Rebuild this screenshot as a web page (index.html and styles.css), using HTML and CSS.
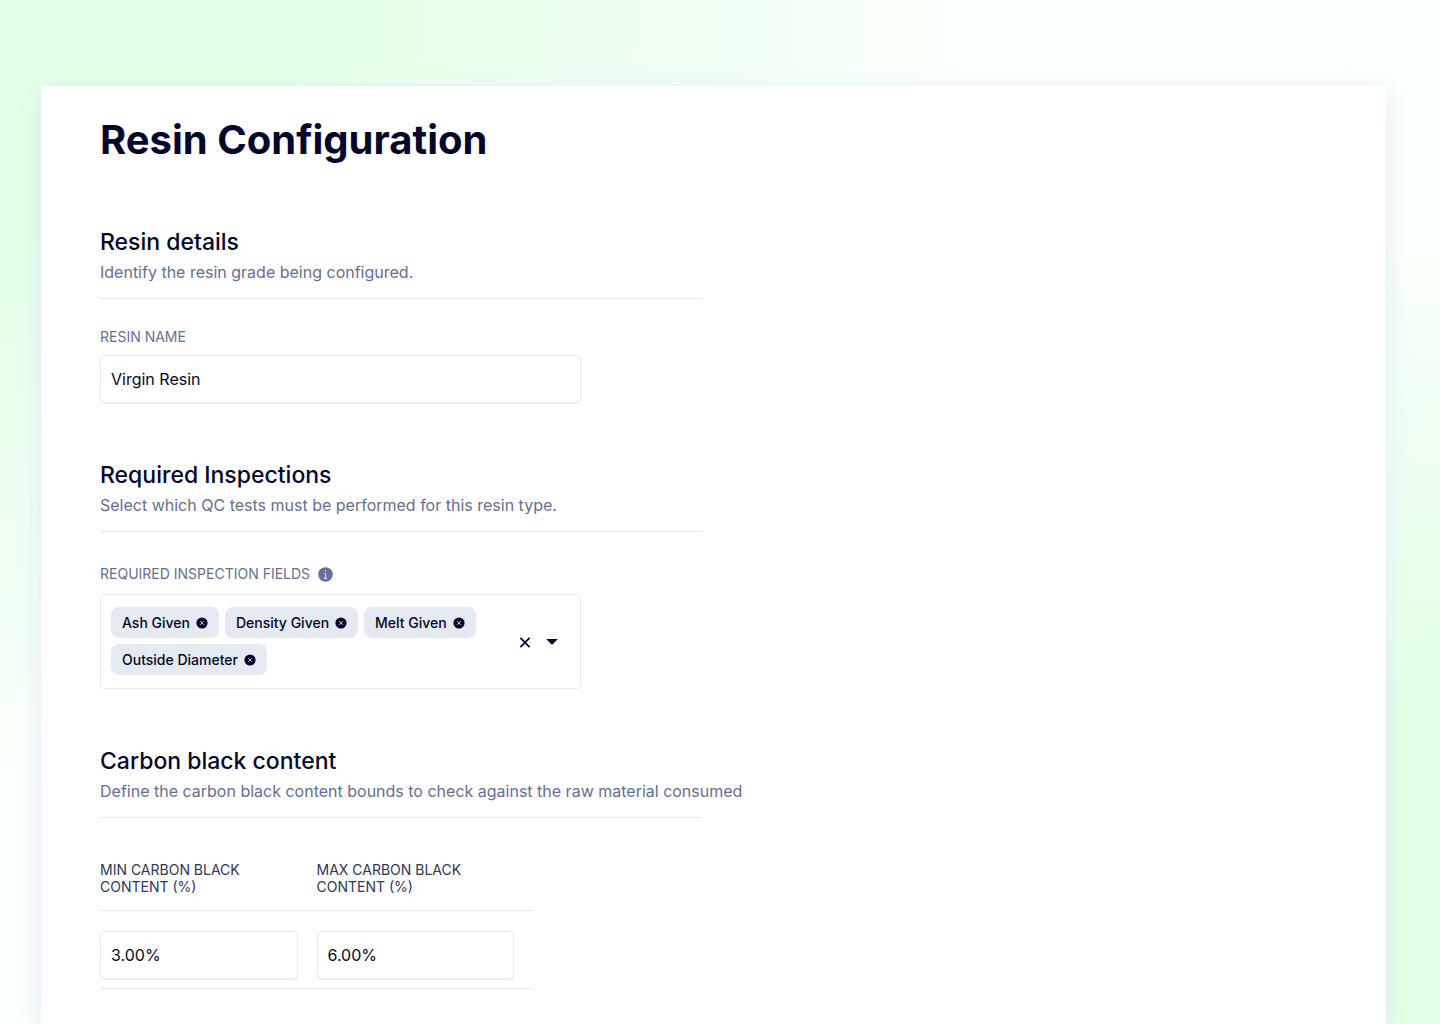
FILE: index.html
```html
<!DOCTYPE html>
<html lang="en">
<head>
<meta charset="utf-8">
<meta name="viewport" content="width=device-width, initial-scale=1">
<title>Resin Configuration</title>
<link rel="stylesheet" href="styles.css">
</head>
<body>
<svg class="sprite" aria-hidden="true">
  <symbol id="remove" viewBox="0 0 12 12">
    <circle cx="6" cy="6" r="5.6" fill="#03082b"/>
    <path d="M4.1 4.1l3.8 3.8M7.9 4.1L4.1 7.9" stroke="#b9bfce" stroke-width="1"/>
  </symbol>
</svg>
<main class="card">
  <h1 class="title">Resin Configuration</h1>
  <form class="form">
    <section class="section">
      <header class="section-head">
        <h2>Resin details</h2>
        <p>Identify the resin grade being configured.</p>
      </header>
      <div class="field">
        <label class="label" for="resin-name">RESIN NAME</label>
        <input class="input" id="resin-name" type="text" value="Virgin Resin">
      </div>
    </section>

    <section class="section">
      <header class="section-head">
        <h2>Required Inspections</h2>
        <p>Select which QC tests must be performed for this resin type.</p>
      </header>
      <div class="field field-multi">
        <div class="label-row">
          <span class="label" id="fields-label">REQUIRED INSPECTION FIELDS</span>
          <button class="icon-button" type="button" aria-label="About required inspection fields">
            <svg width="15" height="15" viewBox="0 0 14 14"><circle cx="7" cy="7" r="6.8" fill="#666f98"/><path d="M7 2.8v1.5M5.7 6H7v4.6M5.5 10.6h3" fill="none" stroke="#d5d9e8" stroke-width="1"/></svg>
          </button>
        </div>
        <div class="multi" role="group" aria-labelledby="fields-label">
          <ul class="chips">
            <li class="chip">Ash Given<button class="icon-button" type="button" aria-label="Remove Ash Given"><svg width="12" height="12"><use href="#remove"/></svg></button></li>
            <li class="chip">Density Given<button class="icon-button" type="button" aria-label="Remove Density Given"><svg width="12" height="12"><use href="#remove"/></svg></button></li>
            <li class="chip">Melt Given<button class="icon-button" type="button" aria-label="Remove Melt Given"><svg width="12" height="12"><use href="#remove"/></svg></button></li>
            <li class="chip">Outside Diameter<button class="icon-button" type="button" aria-label="Remove Outside Diameter"><svg width="12" height="12"><use href="#remove"/></svg></button></li>
          </ul>
          <div class="multi-actions">
            <button class="icon-button" type="button" aria-label="Clear all"><svg width="12" height="12" viewBox="0 0 12 12"><path d="M1.4 1.9l9.2 9.2M10.6 1.9l-9.2 9.2" stroke="#03082b" stroke-width="1.8"/></svg></button>
            <button class="icon-button" type="button" aria-label="Open options"><svg width="12" height="12" viewBox="0 0 12 12"><path d="M.9 2.9h10.2q.9 0 .3.7L6.7 8.3q-.7.6-1.4 0L.6 3.6q-.6-.7.3-.7z" fill="#03082b"/></svg></button>
          </div>
        </div>
      </div>
    </section>

    <section class="section">
      <header class="section-head">
        <h2>Carbon black content</h2>
        <p>Define the carbon black content bounds to check against the raw material consumed</p>
      </header>
      <table class="bounds">
        <thead>
          <tr>
            <th scope="col" id="min-label">MIN CARBON BLACK<br>CONTENT (%)</th>
            <th scope="col" id="max-label">MAX CARBON BLACK<br>CONTENT (%)</th>
          </tr>
        </thead>
        <tbody>
          <tr>
            <td><input class="input" type="text" value="3.00%" aria-labelledby="min-label"></td>
            <td><input class="input" type="text" value="6.00%" aria-labelledby="max-label"></td>
          </tr>
        </tbody>
      </table>
    </section>
  </form>
</main>
</body>
</html>
```
FILE: styles.css
```css
*,
*::before,
*::after {
  box-sizing: border-box;
}

body {
  margin: 0;
  min-height: 100vh;
  padding: 86px 54px 0 41px;
  display: flex;
  background:
    radial-gradient(ellipse 960px 780px at 0 0, #e3ffe6 0%, #e3ffe6 30%, rgba(227, 255, 230, 0) 100%),
    radial-gradient(ellipse 800px 780px at 100% 100%, #e3ffe6 0%, #e3ffe6 42%, rgba(227, 255, 230, 0) 100%),
    #f9fffa;
  color: #03082b;
  font-family: Inter, "Liberation Sans", sans-serif;
}

h1,
h2,
p,
ul {
  margin: 0;
  padding: 0;
}

.sprite {
  display: none;
}

.card {
  flex: 1;
  min-width: 0;
  padding: 26px 59px 32px;
  background: #fff;
  border-radius: 4px 4px 0 0;
  box-shadow: 0 6px 24px rgba(215, 224, 252, 0.6);
}

.title {
  margin-bottom: 58px;
  font-size: 40px;
  line-height: 56px;
  font-weight: 700;
}

.form {
  display: flex;
  flex-direction: column;
  gap: 56px;
}

.section-head {
  max-width: 602px;
  padding-bottom: 14px;
  border-bottom: 1px solid #e6e8ec;
  white-space: nowrap;
}

.section-head h2 {
  font-size: 23px;
  line-height: 32px;
  font-weight: 500;
}

.section-head p {
  padding-top: 2px;
  color: #666f91;
  font-size: 16px;
  line-height: 24px;
}

.field {
  display: flex;
  flex-direction: column;
  gap: 8px;
  max-width: 481px;
  padding-top: 28px;
}

.field-multi {
  gap: 10px;
  padding-top: 32px;
}

.label-row {
  display: flex;
  align-items: center;
  gap: 8px;
}

.label {
  color: #666f91;
  font-size: 14px;
  line-height: 20px;
}

.input {
  display: block;
  width: 100%;
  height: 48px;
  padding: 0 10px;
  border: 1px solid #e9ebf4;
  border-radius: 5px;
  background: #fff;
  box-shadow: 0 1px 2px #e9ecf5;
  color: inherit;
  font: inherit;
  font-size: 16px;
}

.icon-button {
  display: flex;
  padding: 0;
  border: 0;
  background: none;
  cursor: pointer;
}

.multi {
  display: flex;
  align-items: center;
  justify-content: space-between;
  padding: 12px 22px 13px 10px;
  border: 1px solid #e9ebf0;
  border-radius: 5px;
}

.chips {
  display: flex;
  flex: 1;
  flex-wrap: wrap;
  gap: 6px;
  list-style: none;
}

.chip {
  display: flex;
  align-items: center;
  gap: 6px;
  height: 31px;
  padding: 0 11px;
  border-radius: 8px;
  background: #e5e9f1;
  font-size: 14px;
  font-weight: 500;
}

.multi-actions {
  display: flex;
  gap: 15px;
  padding-top: 2px;
}

.bounds {
  margin-top: 43px;
  width: 100%;
  max-width: 433px;
  border-collapse: collapse;
  table-layout: fixed;
}

.bounds th {
  padding: 0 0 15px;
  border-bottom: 1px solid #e6e8ec;
  color: #31365a;
  font-size: 14px;
  line-height: 17px;
  font-weight: 400;
  text-align: left;
}

.bounds td {
  padding: 20px 19px 9px 0;
  border-bottom: 1px solid #e6e8ec;
}
```
